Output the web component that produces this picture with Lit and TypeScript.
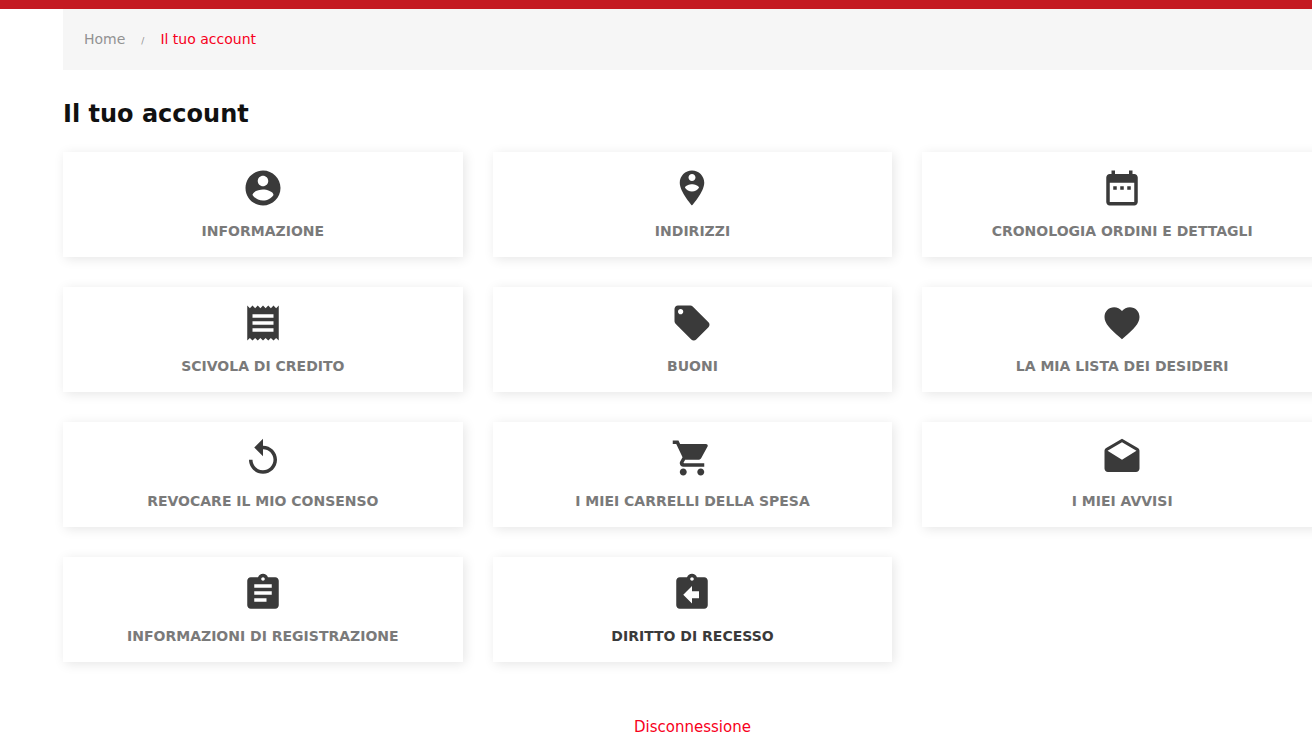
import { LitElement, html, css, svg } from "lit";
import { customElement, property } from "lit/decorators.js";

const icons: Record<string, string> = {
  account:
    "M12 2C6.48 2 2 6.48 2 12s4.48 10 10 10 10-4.48 10-10S17.52 2 12 2zm0 3c1.66 0 3 1.34 3 3s-1.34 3-3 3-3-1.34-3-3 1.34-3 3-3zm0 14.2c-2.5 0-4.71-1.28-6-3.22.03-1.99 4-3.08 6-3.08 1.99 0 5.97 1.09 6 3.08-1.29 1.94-3.5 3.22-6 3.22z",
  pin: "M12 2C8.14 2 5 5.14 5 9c0 5.25 7 13 7 13s7-7.75 7-13c0-3.86-3.14-7-7-7zm0 2c1.1 0 2 .9 2 2 0 1.11-.9 2-2 2s-2-.89-2-2c0-1.1.9-2 2-2zm0 10c-1.67 0-3.14-.85-4-2.15.02-1.32 2.67-2.05 4-2.05s3.98.73 4 2.05c-.86 1.3-2.33 2.15-4 2.15z",
  calendar:
    "M9 11H7v2h2v-2zm4 0h-2v2h2v-2zm4 0h-2v2h2v-2zm2-7h-1V2h-2v2H8V2H6v2H5c-1.11 0-1.99.9-1.99 2L3 20c0 1.1.89 2 2 2h14c1.1 0 2-.9 2-2V6c0-1.1-.9-2-2-2zm0 16H5V9h14v11z",
  receipt:
    "M18 17H6v-2h12v2zm0-4H6v-2h12v2zm0-4H6V7h12v2zM3 22l1.5-1.5L6 22l1.5-1.5L9 22l1.5-1.5L12 22l1.5-1.5L15 22l1.5-1.5L18 22l1.5-1.5L21 22V2l-1.5 1.5L18 2l-1.5 1.5L15 2l-1.5 1.5L12 2l-1.5 1.5L9 2 7.5 3.5 6 2 4.5 3.5 3 2v20z",
  tag: "M21.41 11.58l-9-9C12.05 2.22 11.55 2 11 2H4c-1.1 0-2 .9-2 2v7c0 .55.22 1.05.59 1.42l9 9c.36.36.86.58 1.41.58.55 0 1.05-.22 1.41-.59l7-7c.37-.36.59-.86.59-1.41 0-.55-.23-1.06-.59-1.42zM5.5 7C4.67 7 4 6.33 4 5.5S4.67 4 5.5 4 7 4.67 7 5.5 6.33 7 5.5 7z",
  heart:
    "M12 21.35l-1.45-1.32C5.4 15.36 2 12.28 2 8.5 2 5.42 4.42 3 7.5 3c1.74 0 3.41.81 4.5 2.09C13.09 3.81 14.76 3 16.5 3 19.58 3 22 5.42 22 8.5c0 3.78-3.4 6.86-8.55 11.54L12 21.35z",
  replay:
    "M12 5V1L7 6l5 5V7c3.31 0 6 2.69 6 6s-2.69 6-6 6-6-2.69-6-6H4c0 4.42 3.58 8 8 8s8-3.58 8-8-3.58-8-8-8z",
  cart: "M7 18c-1.1 0-1.99.9-1.99 2S5.9 22 7 22s2-.9 2-2-.9-2-2-2zM1 2v2h2l3.6 7.59-1.35 2.45c-.16.28-.25.61-.25.96 0 1.1.9 2 2 2h12v-2H7.42c-.14 0-.25-.11-.25-.25l.03-.12.9-1.63h7.45c.75 0 1.41-.41 1.75-1.03l3.58-6.49c.08-.14.12-.31.12-.48 0-.55-.45-1-1-1H5.21l-.94-2H1zm16 16c-1.1 0-1.99.9-1.99 2s.89 2 1.99 2 2-.9 2-2-.9-2-2-2z",
  drafts:
    "M21.99 8c0-.72-.37-1.35-.94-1.7L12 1 2.95 6.3C2.38 6.65 2 7.28 2 8v10c0 1.1.9 2 2 2h16c1.1 0 2-.9 2-2l-.01-10zM12 13L3.74 7.84 12 3l8.26 4.84L12 13z",
  assignment:
    "M19 3h-4.18C14.4 1.84 13.3 1 12 1c-1.3 0-2.4.84-2.82 2H5c-1.1 0-2 .9-2 2v14c0 1.1.9 2 2 2h14c1.1 0 2-.9 2-2V5c0-1.1-.9-2-2-2zm-7 0c.55 0 1 .45 1 1s-.45 1-1 1-1-.45-1-1 .45-1 1-1zm2 14H7v-2h7v2zm3-4H7v-2h10v2zm0-4H7V7h10v2z",
  returns:
    "M19 3h-4.18C14.4 1.84 13.3 1 12 1c-1.3 0-2.4.84-2.82 2H5c-1.1 0-2 .9-2 2v14c0 1.1.9 2 2 2h14c1.1 0 2-.9 2-2V5c0-1.1-.9-2-2-2zm-7 0c.55 0 1 .45 1 1s-.45 1-1 1-1-.45-1-1 .45-1 1-1zm4 12h-4v3l-5-5 5-5v3h4v4z",
};

const links = [
  { icon: "account", label: "Informazione" },
  { icon: "pin", label: "Indirizzi" },
  { icon: "calendar", label: "Cronologia ordini e dettagli" },
  { icon: "receipt", label: "Scivola di credito" },
  { icon: "tag", label: "Buoni" },
  { icon: "heart", label: "La mia lista dei desideri" },
  { icon: "replay", label: "Revocare il mio consenso" },
  { icon: "cart", label: "I miei carrelli della spesa" },
  { icon: "drafts", label: "I miei avvisi" },
  { icon: "assignment", label: "Informazioni di registrazione" },
  { icon: "returns", label: "Diritto di recesso", strong: true },
];

@customElement("account-tile")
export class AccountTile extends LitElement {
  @property() icon = "";
  @property() label = "";
  @property({ type: Boolean }) strong = false;

  static styles = css`
    :host {
      display: block;
    }
    .tile {
      display: flex;
      flex-direction: column;
      align-items: center;
      gap: 12px;
      padding: 15px 16px;
      background: #fff;
      box-shadow: 2px 2px 11px rgba(0, 0, 0, 0.1);
      color: #7a7a7a;
      font-size: 14px;
      font-weight: 700;
      line-height: 21px;
      text-align: center;
      text-decoration: none;
      text-transform: uppercase;
    }
    .tile.strong {
      color: #3a3a3a;
    }
    .icon {
      display: block;
      width: 42px;
      height: 42px;
      fill: #3a3a3a;
    }
  `;

  render() {
    return html`<a class="tile ${this.strong ? "strong" : ""}" href="#">
      <svg class="icon" viewBox="0 0 24 24" aria-hidden="true">
        ${svg`<path d=${icons[this.icon]}></path>`}
      </svg>
      <span>${this.label}</span>
    </a>`;
  }
}

@customElement("app-root")
export class AppRoot extends LitElement {
  static styles = css`
    :host {
      display: block;
      overflow: hidden;
      background: #fff;
      color: #7a7a7a;
      font-family: Verdana, "DejaVu Sans", sans-serif;
      font-size: 14px;
      line-height: 20px;
    }
    .bar {
      height: 9px;
      background: #c41a22;
    }
    .page {
      margin: 0 -10px 0 63px;
    }
    .crumbs {
      background: #f6f6f6;
      padding: 20px 21px 21px;
    }
    .crumbs ol {
      display: flex;
      align-items: baseline;
      gap: 16px;
      margin: 0;
      padding: 0;
      list-style: none;
    }
    .crumbs a {
      color: #929292;
      text-decoration: none;
    }
    .crumbs .current,
    .logout {
      color: #f70020;
    }
    .slash {
      color: #929292;
      font-size: 9px;
      line-height: 14px;
    }
    h1 {
      margin: 28px 0 22px;
      color: #111;
      font-size: 24px;
      font-weight: 700;
      line-height: 32px;
    }
    .grid {
      display: grid;
      grid-template-columns: repeat(3, minmax(0, 1fr));
      gap: 30px;
    }
    .foot {
      padding: 55px 0 17px;
      text-align: center;
    }
    .logout {
      font-size: 15px;
      line-height: 21px;
      text-decoration: none;
    }
  `;

  render() {
    return html`
      <div class="bar"></div>
      <div class="page">
        <nav class="crumbs" aria-label="Breadcrumb">
          <ol>
            <li><a href="#">Home</a></li>
            <li class="slash" aria-hidden="true">/</li>
            <li class="current" aria-current="page">Il tuo account</li>
          </ol>
        </nav>
        <main>
          <h1>Il tuo account</h1>
          <div class="grid">
            ${links.map(
              (l) => html`<account-tile
                .icon=${l.icon}
                .label=${l.label}
                .strong=${!!l.strong}
              ></account-tile>`
            )}
          </div>
        </main>
        <footer class="foot"><a class="logout" href="#">Disconnessione</a></footer>
      </div>
    `;
  }
}
